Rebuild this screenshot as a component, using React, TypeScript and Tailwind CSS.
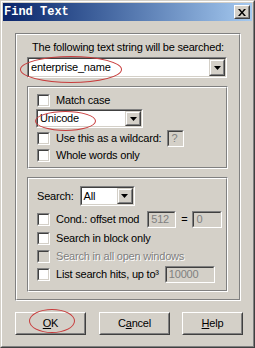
import React from "react";

const face = "bg-[#d4d0c8]";

const CheckBox = ({ disabled = false }: { disabled?: boolean }) => (
    <div className="w-[13px] h-[13px] shrink-0 border border-t-[#808080] border-l-[#808080] border-r-white border-b-white">
        <div className={`w-full h-full border border-t-[#404040] border-l-[#404040] border-r-[#d4d0c8] border-b-[#d4d0c8] ${disabled ? face : "bg-white"}`} />
    </div>
);

const Sunken = ({ className = "", children }: { className?: string; children?: React.ReactNode }) => (
    <div className={`border border-t-[#808080] border-l-[#808080] border-r-white border-b-white ${className}`}>
        <div className="w-full h-full border border-t-[#404040] border-l-[#404040] border-r-[#d4d0c8] border-b-[#d4d0c8] flex items-center overflow-hidden">
            {children}
        </div>
    </div>
);

const Raised = ({ className = "", children }: { className?: string; children?: React.ReactNode }) => (
    <div className={`border border-t-[#d4d0c8] border-l-[#d4d0c8] border-r-[#404040] border-b-[#404040] ${face} ${className}`}>
        <div className="w-full h-full border border-t-white border-l-white border-r-[#808080] border-b-[#808080] flex items-center justify-center">
            {children}
        </div>
    </div>
);

const Etched = ({ className = "", children }: { className?: string; children?: React.ReactNode }) => (
    <div className={`border border-t-[#808080] border-l-[#808080] border-r-white border-b-white ${className}`}>
        <div className="w-full h-full border border-t-white border-l-white border-r-[#808080] border-b-[#808080]">
            {children}
        </div>
    </div>
);

const Arrow = () => (
    <svg width="7" height="4" viewBox="0 0 7 4">
        <path d="M0 0H7L3.5 4Z" fill="#000" />
    </svg>
);

const Combo = ({ className = "", value }: { className?: string; value: string }) => (
    <Sunken className={`bg-white ${className}`}>
        <span className="flex-1 pl-[2px] leading-none whitespace-nowrap">{value}</span>
        <Raised className="w-[16px] h-full">
            <Arrow />
        </Raised>
    </Sunken>
);

const Field = ({ className = "", value }: { className?: string; value: string }) => (
    <Sunken className={`${face} ${className}`}>
        <span className="pl-[2px] text-[#808080] leading-none">{value}</span>
    </Sunken>
);

const Row = ({ children, className = "" }: { children: React.ReactNode; className?: string }) => (
    <div className={`flex items-center gap-[6px] whitespace-nowrap ${className}`}>{children}</div>
);

const Button = ({ className = "", children }: { className?: string; children: React.ReactNode }) => (
    <div className={`h-[23px] border border-t-white border-l-white border-r-[#404040] border-b-[#404040] ${face} ${className}`}>
        <div className="w-full h-full border border-t-[#d4d0c8] border-l-[#d4d0c8] border-r-[#808080] border-b-[#808080] flex items-center justify-center">
            {children}
        </div>
    </div>
);

const App = () => {
    return (
        <div className="relative w-[255px] h-[348px] border border-t-[#d4d0c8] border-l-[#d4d0c8] border-r-[#404040] border-b-[#404040] text-[11px] tracking-[-0.2px] text-black"
            style={{ fontFamily: '"Liberation Sans", Arial, sans-serif' }}>
            <div className={`w-full h-full border border-t-white border-l-white border-r-[#808080] border-b-[#808080] ${face} p-[1px] flex flex-col`}>
                {/* title bar */}
                <div className="h-[18px] flex items-center bg-gradient-to-r from-[#0a246a] to-[#a6caf0] pl-[1px] pr-[2px]">
                    <span className="flex-1 text-white font-bold text-[12px] leading-none tracking-normal"
                        style={{ fontFamily: '"Liberation Mono", "Courier New", monospace' }}>Find Text</span>
                    <Button className="!h-[14px] w-[16px]">
                        <svg width="8" height="7" viewBox="0 0 8 7">
                            <path d="M0 0h2l2 2.5L6 0h2L5 3.5 8 7H6L4 4.5 2 7H0l3-3.5z" fill="#000" />
                        </svg>
                    </Button>
                </div>

                {/* outer group */}
                <Etched className="ml-[12px] mt-[12px] w-[226px] h-[268px]">
                    <div className="flex flex-col items-start px-[9px]">
                        <div className="self-center mt-[5px] leading-[14px] whitespace-nowrap">The following text string will be searched:</div>
                        <Combo className="mt-[3px] w-[200px] h-[21px] ml-[1px]" value="enterprise_name" />

                        <Etched className="mt-[8px] ml-[1px] w-[201px] h-[83px]">
                            <div className="flex flex-col pl-[8px] pt-[3px]">
                                <Row className="h-[18px]">
                                    <CheckBox />
                                    <span>Match case</span>
                                </Row>
                                <Combo className="w-[107px] h-[19px] -ml-[1px]" value="Unicode" />
                                <Row className="h-[18px] mt-[1px]">
                                    <CheckBox />
                                    <span>Use this as a wildcard:</span>
                                    <Field className="w-[17px] h-[17px]" value="?" />
                                </Row>
                                <Row className="h-[17px]">
                                    <CheckBox />
                                    <span>Whole words only</span>
                                </Row>
                            </div>
                        </Etched>

                        <Etched className="mt-[8px] ml-[1px] w-[201px] h-[115px]">
                            <div className="flex flex-col pl-[8px] pt-[7px]">
                                <Row className="h-[20px] gap-[5px]">
                                    <span>Search:</span>
                                    <Combo className="w-[55px] h-[20px]" value="All" />
                                </Row>
                                <Row className="h-[19px] mt-[4px]">
                                    <CheckBox />
                                    <span>Cond.: offset mod</span>
                                    <Field className="w-[29px] h-[17px] ml-[2px]" value="512" />
                                    <span className="-mx-[1px]">=</span>
                                    <Field className="w-[30px] h-[17px]" value="0" />
                                </Row>
                                <Row className="h-[18px]">
                                    <CheckBox />
                                    <span>Search in block only</span>
                                </Row>
                                <Row className="h-[18px]">
                                    <CheckBox disabled />
                                    <span className="text-[#808080] [text-shadow:1px_1px_0_#fff]">Search in all open windows</span>
                                </Row>
                                <Row className="h-[18px]">
                                    <CheckBox />
                                    <span>List search hits, up to³</span>
                                    <Field className="w-[50px] h-[17px]" value="10000" />
                                </Row>
                            </div>
                        </Etched>
                    </div>
                </Etched>

                {/* buttons */}
                <div className="flex ml-[12px] mt-[11px] gap-[13px]">
                    <Button className="w-[71px]"><span><span className="underline">O</span>K</span></Button>
                    <Button className="w-[71px]"><span>C<span className="underline">a</span>ncel</span></Button>
                    <Button className="w-[61px] ml-[-1px]"><span><span className="underline">H</span>elp</span></Button>
                </div>
            </div>

            {/* red annotation ellipses */}
            <div className="absolute left-[19px] top-[55px] w-[102px] h-[27px] rounded-[50%] border border-[#c83c3c]" />
            <div className="absolute left-[34px] top-[110px] w-[61px] h-[20px] rounded-[50%] border border-[#c83c3c]" />
            <div className="absolute left-[28px] top-[308px] w-[46px] h-[24px] rounded-[50%] border border-[#c83c3c]" />
        </div>
    );
};

export default App;
